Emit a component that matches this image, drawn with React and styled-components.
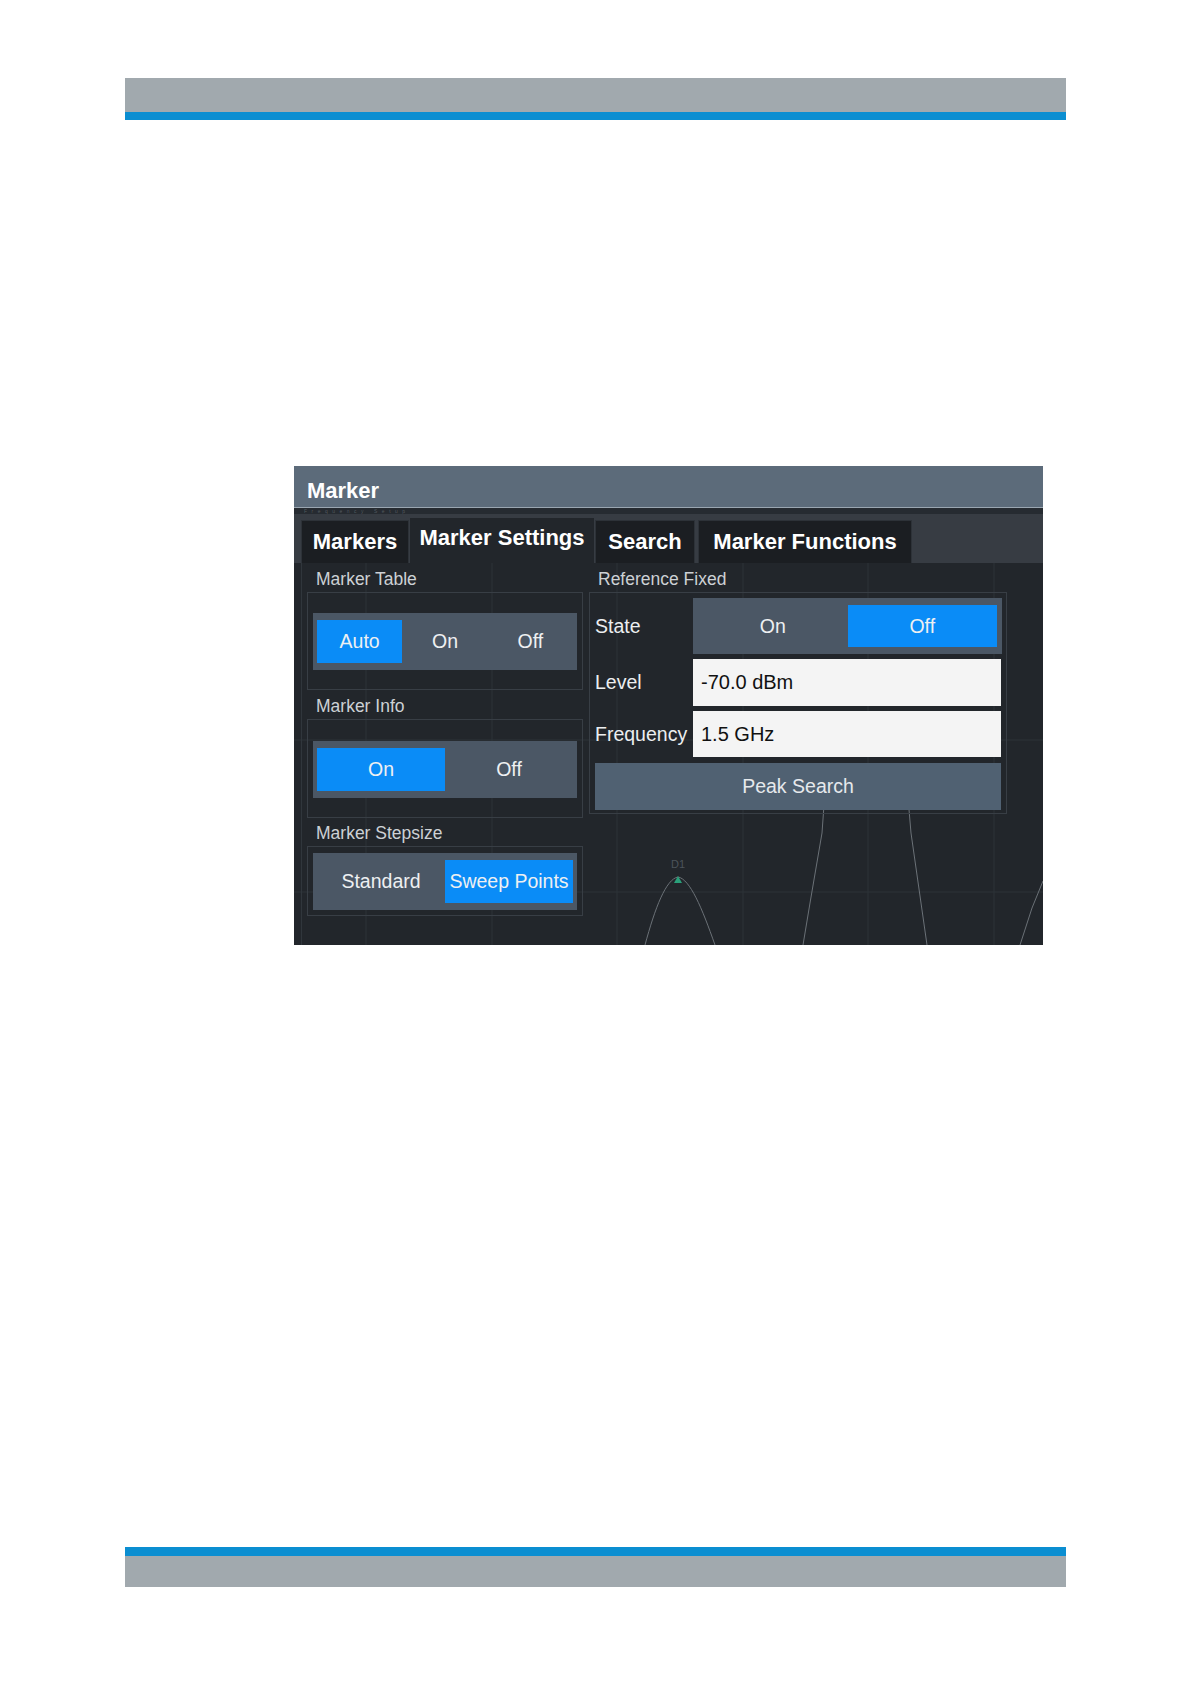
import React from "react";
import styled, { createGlobalStyle } from "styled-components";

const GlobalStyle = createGlobalStyle`
  html, body { margin: 0; padding: 0; background: #ffffff; }
  body { font-family: "Liberation Sans", Arial, sans-serif; }
  * { box-sizing: border-box; }
`;

const Page = styled.div`
  width: 1191px;
  height: 1684px;
  padding-top: 78px;
  overflow: hidden;
`;

const Band = styled.div`
  width: 941px;
  margin-left: 125px;
  height: ${(p) => p.$h}px;
  background: ${(p) => (p.$blue ? "#0b8ed1" : "#a1a9ae")};
`;

const Dialog = styled.div`
  width: 749px;
  height: 479px;
  margin: 346px 0 0 294px;
  background: #22262b;
  display: flex;
  flex-direction: column;
  overflow: hidden;
`;

const TitleBar = styled.div`
  height: 42px;
  flex: none;
  background: #5c6b7a;
  border-bottom: 1px solid #9aa6b1;
  padding: 8px 0 0 13px;
  display: flex;
  align-items: center;
  color: #ffffff;
  font-weight: 700;
  font-size: 22px;
`;

const GhostStrip = styled.div`
  height: 6px;
  flex: none;
  background: #262b31;
  padding-left: 10px;
  font-size: 5px;
  line-height: 6px;
  letter-spacing: 4.5px;
  color: rgba(190, 198, 206, 0.3);
  white-space: nowrap;
`;

const TabBar = styled.div`
  height: 49px;
  flex: none;
  background: #373c43;
  padding: 6px 0 0 7px;
  display: flex;
  align-items: flex-end;
`;

const Tab = styled.div`
  width: ${(p) => p.$w}px;
  margin-right: ${(p) => p.$gap}px;
  height: ${(p) => (p.$active ? 45 : 43)}px;
  background: ${(p) => (p.$active ? "#22262b" : "#1b1e22")};
  border: 1px solid ${(p) => (p.$active ? "#22262b" : "#2d3238")};
  border-bottom: none;
  color: #ffffff;
  font-weight: 700;
  font-size: 22px;
  display: flex;
  align-items: center;
  justify-content: center;
  padding-bottom: ${(p) => (p.$active ? 6 : 0)}px;
  white-space: nowrap;
`;

const Content = styled.div`
  position: relative;
  flex: 1;
`;

const Spectrum = styled.svg`
  position: absolute;
  left: 0;
  top: 0;
  width: 749px;
  height: 382px;
`;

const Columns = styled.div`
  position: relative;
  height: 100%;
  margin-left: 7px;
  border-left: 1px solid #30363c;
  padding-left: 5px;
  display: flex;
  gap: 6px;
  align-items: flex-start;
`;

const Column = styled.div`
  width: ${(p) => p.$w}px;
  padding-top: 4px;
  display: flex;
  flex-direction: column;
`;

const GroupLabel = styled.div`
  height: 25px;
  line-height: 25px;
  margin-top: ${(p) => p.$mt || 0}px;
  padding-left: 9px;
  font-size: 17.5px;
  color: #cdd1d5;
  white-space: nowrap;
`;

const GroupBox = styled.div`
  border: 1px solid #383e45;
  padding: ${(p) => p.$pad};
`;

const Toggle = styled.div`
  height: ${(p) => p.$h || 57}px;
  background: #4b5765;
  padding: 7px ${(p) => p.$px || 4}px;
  display: grid;
  grid-template-columns: repeat(${(p) => p.$n}, 1fr);
`;

const ToggleOption = styled.div`
  background: ${(p) => (p.$on ? "#0a8cf7" : "transparent")};
  color: #eef0f2;
  font-size: 19.5px;
  display: flex;
  align-items: center;
  justify-content: center;
  white-space: nowrap;
`;

const FieldGrid = styled.div`
  display: grid;
  grid-template-columns: 98px 1fr;
  grid-template-rows: 56px 47px 46px 48px;
  row-gap: 5px;
`;

const FieldLabel = styled.div`
  display: flex;
  align-items: center;
  font-size: 19.5px;
  color: #eceef0;
  white-space: nowrap;
`;

const ValueInput = styled.div`
  background: #f4f4f4;
  margin-right: 1px;
  padding-left: 8px;
  display: flex;
  align-items: center;
  font-size: 20px;
  color: #111111;
`;

const PeakButton = styled.div`
  grid-column: 1 / span 2;
  margin-top: 1px;
  margin-right: 1px;
  background: #506172;
  color: #e6e9ec;
  font-size: 19.5px;
  display: flex;
  align-items: center;
  justify-content: center;
`;

const FooterSpacer = styled.div`
  height: 602px;
`;

const tabs = [
  { label: "Markers", w: 108, gap: 1 },
  { label: "Marker Settings", w: 184, gap: 1, active: true },
  { label: "Search", w: 100, gap: 3 },
  { label: "Marker Functions", w: 214, gap: 0 },
];

function SpectrumBackground() {
  const vx = [72, 198, 323, 449, 574, 700];
  const hy = [177, 329];
  return (
    <Spectrum viewBox="0 0 749 382">
      {vx.map((x) => (
        <line key={x} x1={x} y1="0" x2={x} y2="382" stroke="#2d3238" strokeWidth="1" />
      ))}
      {hy.map((y) => (
        <line key={y} x1="0" y1={y} x2="749" y2={y} stroke="#2d3238" strokeWidth="1" />
      ))}
      <g fill="none" stroke="#6b7177" strokeWidth="1">
        <path d="M351 382 C 361 345, 372 316, 384 314 C 396 316, 408 345, 421 382" />
        <path d="M533 200 L 528 270 L 516 340 L 509 382" />
        <path d="M611 200 L 617 270 L 627 340 L 633 382" />
        <path d="M749 318 L 738 345 L 726 382" />
      </g>
      <path d="M380 320 L384 313 L388 320 Z" fill="#2aa07a" />
      <text x="377" y="305" fontSize="11" fill="#4c535a" fontFamily="Liberation Sans, sans-serif">D1</text>
    </Spectrum>
  );
}

export default function App() {
  return (
    <>
      <GlobalStyle />
      <Page>
        <Band $h={34} />
        <Band $h={8} $blue />
        <Dialog>
          <TitleBar>Marker</TitleBar>
          <GhostStrip>Frequency Setup</GhostStrip>
          <TabBar>
            {tabs.map((t) => (
              <Tab key={t.label} $w={t.w} $gap={t.gap} $active={t.active}>
                {t.label}
              </Tab>
            ))}
          </TabBar>
          <Content>
            <SpectrumBackground />
            <Columns>
              <Column $w={276}>
                <GroupLabel>Marker Table</GroupLabel>
                <GroupBox $pad="20px 5px 19px">
                  <Toggle $n={3}>
                    <ToggleOption $on>Auto</ToggleOption>
                    <ToggleOption>On</ToggleOption>
                    <ToggleOption>Off</ToggleOption>
                  </Toggle>
                </GroupBox>
                <GroupLabel $mt={4}>Marker Info</GroupLabel>
                <GroupBox $pad="21px 5px 19px">
                  <Toggle $n={2}>
                    <ToggleOption $on>On</ToggleOption>
                    <ToggleOption>Off</ToggleOption>
                  </Toggle>
                </GroupBox>
                <GroupLabel $mt={3}>Marker Stepsize</GroupLabel>
                <GroupBox $pad="6px 5px 5px">
                  <Toggle $n={2}>
                    <ToggleOption>Standard</ToggleOption>
                    <ToggleOption $on>Sweep Points</ToggleOption>
                  </Toggle>
                </GroupBox>
              </Column>
              <Column $w={418}>
                <GroupLabel>Reference Fixed</GroupLabel>
                <GroupBox $pad="5px 4px 3px 5px">
                  <FieldGrid>
                    <FieldLabel>State</FieldLabel>
                    <Toggle $n={2} $h={56} $px={5}>
                      <ToggleOption>On</ToggleOption>
                      <ToggleOption $on>Off</ToggleOption>
                    </Toggle>
                    <FieldLabel>Level</FieldLabel>
                    <ValueInput>-70.0 dBm</ValueInput>
                    <FieldLabel>Frequency</FieldLabel>
                    <ValueInput>1.5 GHz</ValueInput>
                    <PeakButton>Peak Search</PeakButton>
                  </FieldGrid>
                </GroupBox>
              </Column>
            </Columns>
          </Content>
        </Dialog>
        <FooterSpacer />
        <Band $h={9} $blue />
        <Band $h={31} />
      </Page>
    </>
  );
}
